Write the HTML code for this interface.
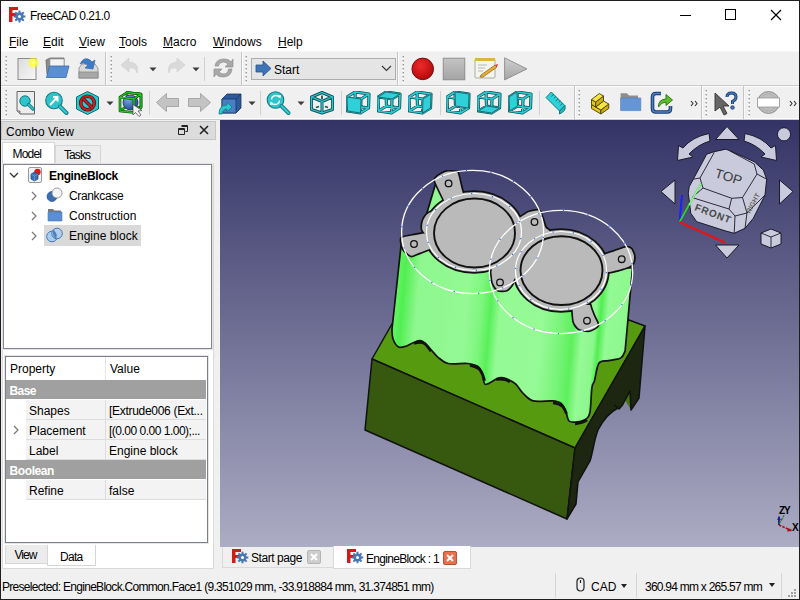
<!DOCTYPE html>
<html><head><meta charset="utf-8">
<style>
*{box-sizing:border-box;margin:0;padding:0}
html,body{width:800px;height:600px;overflow:hidden;background:#f0f0f0;font-family:"Liberation Sans",sans-serif;font-size:12px;color:#000}
.a{position:absolute}
.t{position:absolute;white-space:nowrap;line-height:1}
#frame{position:absolute;left:0;top:0;width:800px;height:600px;border:1px solid #1e1e1e;pointer-events:none;z-index:50}
.mi{position:absolute;top:36px;font-size:12px}
.mi u{text-decoration:underline;text-decoration-thickness:1px;text-underline-offset:1px}
.grip{position:absolute;width:2px;background:repeating-linear-gradient(to bottom,#9a9a9a 0 1px,#fff 1px 2px,transparent 2px 4px)}
.vs{position:absolute;width:1px;background:#d2d2d2}
.dd{position:absolute;width:0;height:0;border-left:3.5px solid transparent;border-right:3.5px solid transparent;border-top:4px solid #222}
.row{position:absolute;left:26px;width:180px;height:20px;background:#f3f3f3;border-bottom:1px solid #dcdcdc;overflow:hidden}
.cdiv{position:absolute;left:105px;top:0;width:1px;height:19px;background:#dcdcdc}
.grp{position:absolute;left:6px;width:200px;height:19px;background:#a0a0a0;color:#fff;font-weight:bold}
</style></head><body>
<div id="frame"></div>
<div class="a" style="left:0;top:0;width:800px;height:51px;background:#fff"></div>
<!-- title -->
<svg class="a" style="left:9px;top:7px" width="17" height="17" viewBox="0 0 17 17">
  <path d="M0 0H9V3H3.5V6H7V9H3.5V15H0Z" fill="#d31a1a"/>
  <g transform="translate(10.5 9.5)" fill="#4a78b5">
    <circle r="4.2"/>
    <path d="M-1 -6H1V6H-1Z M-6 -1H6V1H-6Z" />
    <path d="M-1 -6H1V6H-1Z M-6 -1H6V1H-6Z" transform="rotate(45)"/>
    <circle r="1.5" fill="#fff"/>
  </g>
</svg>
<div class="t" style="left:30px;top:10px;font-size:12px;letter-spacing:-0.5px">FreeCAD 0.21.0</div>
<!-- window buttons -->
<div class="a" style="left:680px;top:15px;width:11px;height:1px;background:#000"></div>
<div class="a" style="left:725px;top:9px;width:11px;height:11px;border:1px solid #000"></div>
<svg class="a" style="left:770px;top:9px" width="12" height="12"><path d="M1 1L11 11M11 1L1 11" stroke="#000" stroke-width="1.2"/></svg>
<!-- menu -->
<div class="mi t" style="left:9px"><u>F</u>ile</div>
<div class="mi t" style="left:43px"><u>E</u>dit</div>
<div class="mi t" style="left:79px"><u>V</u>iew</div>
<div class="mi t" style="left:119px"><u>T</u>ools</div>
<div class="mi t" style="left:163px"><u>M</u>acro</div>
<div class="mi t" style="left:213px"><u>W</u>indows</div>
<div class="mi t" style="left:278px"><u>H</u>elp</div>

<!-- toolbar area -->
<div class="a" style="left:1px;top:51px;width:798px;height:1px;background:#f8f8f8"></div>
<div class="a" style="left:1px;top:85px;width:798px;height:1px;background:#dadada"></div>
<div class="a" style="left:1px;top:119px;width:798px;height:1px;background:#d0d0d0"></div>

<!-- TB -->
<div class="a" style="left:1px;top:85px;width:798px;height:1px;background:#cacaca"></div>
<div class="a" style="left:1px;top:86px;width:798px;height:1px;background:#fcfcfc"></div>
<div class="a" style="left:1px;top:118px;width:798px;height:1px;background:#fcfcfc"></div>
<div class="a" style="left:1px;top:119px;width:798px;height:1px;background:#cacaca"></div>
<svg class="a" style="left:5px;top:56px" width="4" height="29"><rect x="0" y="1" width="2" height="2" fill="#fff"/><rect x="0.5" y="0" width="1.5" height="1.5" fill="#9a9a9a"/><rect x="0" y="5" width="2" height="2" fill="#fff"/><rect x="0.5" y="4" width="1.5" height="1.5" fill="#9a9a9a"/><rect x="0" y="9" width="2" height="2" fill="#fff"/><rect x="0.5" y="8" width="1.5" height="1.5" fill="#9a9a9a"/><rect x="0" y="13" width="2" height="2" fill="#fff"/><rect x="0.5" y="12" width="1.5" height="1.5" fill="#9a9a9a"/><rect x="0" y="17" width="2" height="2" fill="#fff"/><rect x="0.5" y="16" width="1.5" height="1.5" fill="#9a9a9a"/><rect x="0" y="21" width="2" height="2" fill="#fff"/><rect x="0.5" y="20" width="1.5" height="1.5" fill="#9a9a9a"/><rect x="0" y="25" width="2" height="2" fill="#fff"/><rect x="0.5" y="24" width="1.5" height="1.5" fill="#9a9a9a"/></svg>
<svg class="a" style="left:16px;top:56px" width="24" height="25" viewBox="0 0 24 25"><defs><linearGradient id="ndg" x1="0" y1="0" x2="1" y2="1"><stop offset="0" stop-color="#dcdcdc"/><stop offset="1" stop-color="#f8f8f8"/></linearGradient><radialGradient id="ndy"><stop offset="0" stop-color="#ffffd0"/><stop offset="0.35" stop-color="#ffff40"/><stop offset="1" stop-color="#ffff00" stop-opacity="0"/></radialGradient></defs><rect x="2" y="2.5" width="18" height="21" fill="url(#ndg)" stroke="#8a8a8a"/><circle cx="17.5" cy="6.5" r="6.5" fill="url(#ndy)"/></svg>
<svg class="a" style="left:44px;top:56px" width="27" height="24" viewBox="0 0 27 24"><path d="M2 4L6 2H20V18H3Z" fill="#8c8c8c" stroke="#666" stroke-width=".8"/><rect x="6" y="3" width="14" height="9" fill="#f4f4f4" stroke="#999" stroke-width=".7"/><path d="M5.5 10H25L22 21.5H2.5Z" fill="#5a8fd2" stroke="#3c6aa8" stroke-width=".8"/></svg>
<svg class="a" style="left:76px;top:56px" width="25" height="25" viewBox="0 0 25 25"><path d="M3 12L6 8H19L22 12V22H3Z" fill="#d8d8d8" stroke="#8a8a8a" stroke-width=".8"/><rect x="3" y="16" width="19" height="6" fill="#a8a8a8" stroke="#888" stroke-width=".8"/><path d="M4 8Q8 0 14 4L16 6L19 4L17 13L9 12L12 9L10 8Q7 6 4 8Z" fill="#3d7bc7" stroke="#2a5a9a" stroke-width=".6"/></svg>
<div class="a" style="left:105px;top:52px;width:1px;height:33px;background:#c4c4c4"></div><div class="a" style="left:106px;top:52px;width:1px;height:33px;background:#fbfbfb"></div>
<svg class="a" style="left:110px;top:56px" width="4" height="29"><rect x="0" y="1" width="2" height="2" fill="#fff"/><rect x="0.5" y="0" width="1.5" height="1.5" fill="#9a9a9a"/><rect x="0" y="5" width="2" height="2" fill="#fff"/><rect x="0.5" y="4" width="1.5" height="1.5" fill="#9a9a9a"/><rect x="0" y="9" width="2" height="2" fill="#fff"/><rect x="0.5" y="8" width="1.5" height="1.5" fill="#9a9a9a"/><rect x="0" y="13" width="2" height="2" fill="#fff"/><rect x="0.5" y="12" width="1.5" height="1.5" fill="#9a9a9a"/><rect x="0" y="17" width="2" height="2" fill="#fff"/><rect x="0.5" y="16" width="1.5" height="1.5" fill="#9a9a9a"/><rect x="0" y="21" width="2" height="2" fill="#fff"/><rect x="0.5" y="20" width="1.5" height="1.5" fill="#9a9a9a"/><rect x="0" y="25" width="2" height="2" fill="#fff"/><rect x="0.5" y="24" width="1.5" height="1.5" fill="#9a9a9a"/></svg>
<svg class="a" style="left:120px;top:57px" width="22" height="20" viewBox="0 0 22 20"><path d="M9 1L1 8L9 15V11Q16 10 17 16Q20 6 9 5Z" fill="#d9d9d9" stroke="#cfcfcf" stroke-width=".6"/></svg>
<svg class="a" style="left:149px;top:67px" width="8" height="5"><path d="M0.5 0.5H7.5L4 4.3Z" fill="#3c3c3c"/></svg>
<svg class="a" style="left:165px;top:57px" width="22" height="20" viewBox="0 0 22 20"><path d="M12 1L20 8L12 15V11Q5 10 4 16Q1 6 12 5Z" fill="#d9d9d9" stroke="#cfcfcf" stroke-width=".6"/></svg>
<svg class="a" style="left:192px;top:67px" width="8" height="5"><path d="M0.5 0.5H7.5L4 4.3Z" fill="#3c3c3c"/></svg>
<div class="a" style="left:204px;top:57px;width:1px;height:24px;background:#d0d0d0"></div>
<svg class="a" style="left:212px;top:56px" width="23" height="24" viewBox="0 0 23 24"><path d="M3 10Q4 3 12 3Q17 3 19 6L21 3V11H13L16 8Q14 6 11.5 6Q7 6 6.5 10Z M20 13Q19 21 11 21Q6 21 4 18L2 21V13H10L7 16Q9 18 11.5 18Q16 18 16.5 13Z" fill="#a9a9a9" stroke="#8e8e8e" stroke-width=".7"/></svg>
<div class="a" style="left:241px;top:52px;width:1px;height:33px;background:#c4c4c4"></div><div class="a" style="left:242px;top:52px;width:1px;height:33px;background:#fbfbfb"></div>
<svg class="a" style="left:245px;top:56px" width="4" height="29"><rect x="0" y="1" width="2" height="2" fill="#fff"/><rect x="0.5" y="0" width="1.5" height="1.5" fill="#9a9a9a"/><rect x="0" y="5" width="2" height="2" fill="#fff"/><rect x="0.5" y="4" width="1.5" height="1.5" fill="#9a9a9a"/><rect x="0" y="9" width="2" height="2" fill="#fff"/><rect x="0.5" y="8" width="1.5" height="1.5" fill="#9a9a9a"/><rect x="0" y="13" width="2" height="2" fill="#fff"/><rect x="0.5" y="12" width="1.5" height="1.5" fill="#9a9a9a"/><rect x="0" y="17" width="2" height="2" fill="#fff"/><rect x="0.5" y="16" width="1.5" height="1.5" fill="#9a9a9a"/><rect x="0" y="21" width="2" height="2" fill="#fff"/><rect x="0.5" y="20" width="1.5" height="1.5" fill="#9a9a9a"/><rect x="0" y="25" width="2" height="2" fill="#fff"/><rect x="0.5" y="24" width="1.5" height="1.5" fill="#9a9a9a"/></svg>
<div class="a" style="left:251px;top:58px;width:145px;height:22px;background:#e5e5e5;border:1px solid #adadad"></div>
<svg class="a" style="left:255px;top:60px" width="18" height="17" viewBox="0 0 18 17"><path d="M1 5H8V1L16 8.5L8 16V12H1Z" fill="#3f74b9" stroke="#28518a" stroke-width=".8"/></svg>
<div class="t" style="left:274px;top:64px">Start</div>
<svg class="a" style="left:381px;top:65px" width="11" height="7" viewBox="0 0 11 7"><path d="M1 1L5.5 5.5L10 1" fill="none" stroke="#333" stroke-width="1.1"/></svg>
<div class="a" style="left:397px;top:52px;width:1px;height:33px;background:#c4c4c4"></div><div class="a" style="left:398px;top:52px;width:1px;height:33px;background:#fbfbfb"></div>
<svg class="a" style="left:402px;top:56px" width="4" height="29"><rect x="0" y="1" width="2" height="2" fill="#fff"/><rect x="0.5" y="0" width="1.5" height="1.5" fill="#9a9a9a"/><rect x="0" y="5" width="2" height="2" fill="#fff"/><rect x="0.5" y="4" width="1.5" height="1.5" fill="#9a9a9a"/><rect x="0" y="9" width="2" height="2" fill="#fff"/><rect x="0.5" y="8" width="1.5" height="1.5" fill="#9a9a9a"/><rect x="0" y="13" width="2" height="2" fill="#fff"/><rect x="0.5" y="12" width="1.5" height="1.5" fill="#9a9a9a"/><rect x="0" y="17" width="2" height="2" fill="#fff"/><rect x="0.5" y="16" width="1.5" height="1.5" fill="#9a9a9a"/><rect x="0" y="21" width="2" height="2" fill="#fff"/><rect x="0.5" y="20" width="1.5" height="1.5" fill="#9a9a9a"/><rect x="0" y="25" width="2" height="2" fill="#fff"/><rect x="0.5" y="24" width="1.5" height="1.5" fill="#9a9a9a"/></svg>
<svg class="a" style="left:410px;top:57px" width="26" height="25" viewBox="0 0 26 25"><defs><radialGradient id="rg" cx="0.4" cy="0.35" r="0.7"><stop offset="0" stop-color="#f02a2a"/><stop offset="1" stop-color="#b00808"/></radialGradient></defs><circle cx="12.75" cy="11.9" r="10.8" fill="url(#rg)" stroke="#6a0a0a" stroke-width=".9"/></svg>
<svg class="a" style="left:442px;top:57px" width="25" height="25" viewBox="0 0 25 25"><defs><linearGradient id="sg" x1="0" y1="0" x2="0" y2="1"><stop offset="0" stop-color="#c4c4c4"/><stop offset="1" stop-color="#a4a4a4"/></linearGradient></defs><rect x="1.2" y="1.2" width="21.6" height="21.6" fill="url(#sg)" stroke="#888" stroke-width=".9"/></svg>
<svg class="a" style="left:473px;top:56px" width="26" height="25" viewBox="0 0 26 25"><rect x="2" y="3" width="20" height="19" rx="1" fill="#f4f4f0" stroke="#9a9a90" stroke-width=".8"/><rect x="2" y="2" width="20" height="3" fill="#d4b840"/><path d="M5 9H14M5 12H12M5 15H10" stroke="#aaa" stroke-width=".8"/><path d="M8 19L22 9L24 11L10 21L7 21Z" fill="#e8b030" stroke="#8a5a10" stroke-width=".7"/><path d="M22 9L24 11L25 8Z" fill="#e03030"/></svg>
<svg class="a" style="left:503px;top:56px" width="26" height="26" viewBox="0 0 26 26"><defs><linearGradient id="pg" x1="0" y1="0" x2="0" y2="1"><stop offset="0" stop-color="#cfcfcf"/><stop offset="1" stop-color="#a5a5a5"/></linearGradient></defs><path d="M1.6 1.8V23.9L23.9 12.9Z" fill="url(#pg)" stroke="#8a8a8a" stroke-width=".9"/></svg>
<svg class="a" style="left:5px;top:90px" width="4" height="29"><rect x="0" y="1" width="2" height="2" fill="#fff"/><rect x="0.5" y="0" width="1.5" height="1.5" fill="#9a9a9a"/><rect x="0" y="5" width="2" height="2" fill="#fff"/><rect x="0.5" y="4" width="1.5" height="1.5" fill="#9a9a9a"/><rect x="0" y="9" width="2" height="2" fill="#fff"/><rect x="0.5" y="8" width="1.5" height="1.5" fill="#9a9a9a"/><rect x="0" y="13" width="2" height="2" fill="#fff"/><rect x="0.5" y="12" width="1.5" height="1.5" fill="#9a9a9a"/><rect x="0" y="17" width="2" height="2" fill="#fff"/><rect x="0.5" y="16" width="1.5" height="1.5" fill="#9a9a9a"/><rect x="0" y="21" width="2" height="2" fill="#fff"/><rect x="0.5" y="20" width="1.5" height="1.5" fill="#9a9a9a"/><rect x="0" y="25" width="2" height="2" fill="#fff"/><rect x="0.5" y="24" width="1.5" height="1.5" fill="#9a9a9a"/></svg>
<svg class="a" style="left:15px;top:90px" width="22" height="26" viewBox="0 0 22 26"><path d="M2 1.5H19.5V24H5L2 21Z" fill="#ececec" stroke="#555" stroke-width=".9"/><path d="M2 21H5V24" fill="#bbb" stroke="#555" stroke-width=".7"/><circle cx="10" cy="11" r="5.2" fill="#2fc4cc" stroke="#137a82" stroke-width="1"/><path d="M13.5 14.5L18 19" stroke="#137a82" stroke-width="3.2" stroke-linecap="round"/><path d="M13.5 14.5L18 19" stroke="#30c8d0" stroke-width="1.6" stroke-linecap="round"/></svg>
<svg class="a" style="left:44px;top:89px" width="26" height="26" viewBox="0 0 26 26"><circle cx="10" cy="11.5" r="8.3" fill="#2fc4cc" stroke="#137a82" stroke-width="1.1"/><path d="M16 17.5L22.5 24" stroke="#137a82" stroke-width="4" stroke-linecap="round"/><path d="M16 17.5L22.5 24" stroke="#30c8d0" stroke-width="2.2" stroke-linecap="round"/><path d="M6 16L13 8.5M9 8H13.5V12.5" fill="none" stroke="#fff" stroke-width="2"/></svg>
<svg class="a" style="left:75px;top:90px" width="26" height="26" viewBox="0 0 26 26"><path d="M12.5 1.5L23.5 7V19L12.5 24.5L1.5 19V7Z" fill="#2cc6cf" stroke="#156a70" stroke-width="1"/><circle cx="12.5" cy="13" r="6.8" fill="none" stroke="#222" stroke-width="3.6"/><circle cx="12.5" cy="13" r="6.8" fill="none" stroke="#d81818" stroke-width="2.2"/><path d="M8 8.5L17 17.5" stroke="#222" stroke-width="3.4"/><path d="M8 8.5L17 17.5" stroke="#d81818" stroke-width="2"/></svg>
<svg class="a" style="left:106px;top:101px" width="8" height="5"><path d="M0.5 0.5H7.5L4 4.3Z" fill="#3c3c3c"/></svg>
<svg class="a" style="left:117px;top:90px" width="27" height="27" viewBox="0 0 27 27"><defs><radialGradient id="bsg" cx="0.35" cy="0.3" r="0.75"><stop offset="0" stop-color="#7aa8e0"/><stop offset="1" stop-color="#1e4a90"/></radialGradient></defs><path d="M10 2.5 L24 4 L24 17.5 L10 16 Z M3 21 L10 16" fill="none" stroke="#0a3a0a" stroke-width="2.6" stroke-linejoin="round"/><path d="M10 2.5 L24 4 L24 17.5 L10 16 Z M3 21 L10 16" fill="none" stroke="#1ecc1e" stroke-width="1.4" stroke-linejoin="round"/><circle cx="13.5" cy="12.5" r="7.5" fill="url(#bsg)" stroke="#1a2a50" stroke-width=".8"/><path d="M3 7 L17 9 L17 22.5 L3 21Z M3 7 L10 2.5 L24 4 L24 17.5 M17 9 L24 4 M17 22.5 L24 17.5" fill="none" stroke="#0a3a0a" stroke-width="2.6" stroke-linejoin="round"/><path d="M3 7 L17 9 L17 22.5 L3 21Z M3 7 L10 2.5 L24 4 L24 17.5 M17 9 L24 4 M17 22.5 L24 17.5" fill="none" stroke="#1ecc1e" stroke-width="1.4" stroke-linejoin="round"/><path d="M16 14.5L16 25L18.5 22.5L22 26.5L24 25L21 21L25 20.5Z" fill="#f4f4f4" stroke="#555" stroke-width=".8"/></svg>
<div class="a" style="left:149px;top:91px;width:1px;height:24px;background:#d0d0d0"></div>
<svg class="a" style="left:155px;top:92px" width="26" height="22" viewBox="0 0 26 22"><path d="M1.5 10.5L11.5 1.5V6.5H23.5V14.5H11.5V19.5Z" fill="#c3c3c3" stroke="#a2a2a2" stroke-width=".9"/></svg>
<svg class="a" style="left:186px;top:92px" width="26" height="22" viewBox="0 0 26 22"><path d="M24.5 10.5L14.5 1.5V6.5H2.5V14.5H14.5V19.5Z" fill="#c3c3c3" stroke="#a2a2a2" stroke-width=".9"/></svg>
<svg class="a" style="left:217px;top:92px" width="26" height="24" viewBox="0 0 26 24"><path d="M5 7L10 2H24V16L19 21H5Z" fill="#2c5a9c" stroke="#16365e" stroke-width=".8"/><path d="M5 7H19V21H5Z" fill="#4a7ec4" stroke="#16365e" stroke-width=".8"/><path d="M19 7L24 2" stroke="#16365e" stroke-width=".8"/><path d="M2 22Q2 13 10 13V10L15 15L10 20V17Q6 17 5 22Z" fill="#2cc6cf" stroke="#137a82" stroke-width=".8"/></svg>
<svg class="a" style="left:248px;top:101px" width="8" height="5"><path d="M0.5 0.5H7.5L4 4.3Z" fill="#3c3c3c"/></svg>
<div class="a" style="left:260px;top:91px;width:1px;height:24px;background:#d0d0d0"></div>
<svg class="a" style="left:265px;top:90px" width="28" height="26" viewBox="0 0 28 26"><circle cx="10.5" cy="10" r="8.3" fill="#2fc4cc" stroke="#137a82" stroke-width="1.1"/><path d="M16.5 16L23.5 23" stroke="#137a82" stroke-width="4" stroke-linecap="round"/><path d="M16.5 16L23.5 23" stroke="#30c8d0" stroke-width="2.2" stroke-linecap="round"/><path d="M6.5 9.5Q7 5.5 11 5.5Q13.5 5.5 14.5 7.5 M14.5 10.5Q14 14.5 10 14.5Q7.5 14.5 6.5 12.5" fill="none" stroke="#fff" stroke-width="1.4"/><path d="M13 5.5L15.5 8.5L16 5Z M8 14.5L5.5 11.5L5 15Z" fill="#fff"/></svg>
<svg class="a" style="left:297px;top:101px" width="8" height="5"><path d="M0.5 0.5H7.5L4 4.3Z" fill="#3c3c3c"/></svg>
<svg class="a" style="left:309px;top:91px" width="26" height="24" viewBox="0 0 26 24"><path d="M13 1.5L23.5 6V18.5L13 22L2.5 18.5V6Z M2.5 6L13 10.5L23.5 6 M13 10.5V22" fill="none" stroke="#14555a" stroke-width="3" stroke-linejoin="round"/><path d="M13 1.5L23.5 6V18.5L13 22L2.5 18.5V6Z M2.5 6L13 10.5L23.5 6 M13 10.5V22" fill="none" stroke="#2ccad2" stroke-width="1.3" stroke-linejoin="round"/><path d="M13 4.5V8 M7 16.5L10 15.5 M16 15.5L19 16.5" stroke="#14555a" stroke-width="1.8"/></svg>
<div class="a" style="left:341px;top:91px;width:1px;height:24px;background:#d0d0d0"></div>
<svg class="a" style="left:346px;top:91px" width="25" height="24" viewBox="0 0 25 24"><polygon points="1,6 15,8 14.5,22 1.5,20" fill="#2fd0d8"/><path d="M1 6 L15 8 L14.5 22 L1.5 20Z M9 1 L23 3 L22.5 17 L9.5 15Z M1 6 L9 1 M15 8 L23 3 M14.5 22 L22.5 17 M1.5 20 L9.5 15" fill="none" stroke="#14555a" stroke-width="3.2" stroke-linejoin="round"/><path d="M1 6 L15 8 L14.5 22 L1.5 20Z M9 1 L23 3 L22.5 17 L9.5 15Z M1 6 L9 1 M15 8 L23 3 M14.5 22 L22.5 17 M1.5 20 L9.5 15" fill="none" stroke="#2ccad2" stroke-width="1.6" stroke-linejoin="round"/><polygon points="1,6 15,8 14.5,22 1.5,20" fill="#2fd0d8" stroke="#14555a" stroke-width=".8"/></svg>
<svg class="a" style="left:377px;top:91px" width="25" height="24" viewBox="0 0 25 24"><polygon points="1,6 15,8 23,3 9,1" fill="#2fd0d8"/><path d="M1 6 L15 8 L14.5 22 L1.5 20Z M9 1 L23 3 L22.5 17 L9.5 15Z M1 6 L9 1 M15 8 L23 3 M14.5 22 L22.5 17 M1.5 20 L9.5 15" fill="none" stroke="#14555a" stroke-width="3.2" stroke-linejoin="round"/><path d="M1 6 L15 8 L14.5 22 L1.5 20Z M9 1 L23 3 L22.5 17 L9.5 15Z M1 6 L9 1 M15 8 L23 3 M14.5 22 L22.5 17 M1.5 20 L9.5 15" fill="none" stroke="#2ccad2" stroke-width="1.6" stroke-linejoin="round"/><polygon points="1,6 15,8 23,3 9,1" fill="#2fd0d8" stroke="#14555a" stroke-width=".8"/></svg>
<svg class="a" style="left:408px;top:91px" width="25" height="24" viewBox="0 0 25 24"><polygon points="15,8 23,3 22.5,17 14.5,22" fill="#2fd0d8"/><path d="M1 6 L15 8 L14.5 22 L1.5 20Z M9 1 L23 3 L22.5 17 L9.5 15Z M1 6 L9 1 M15 8 L23 3 M14.5 22 L22.5 17 M1.5 20 L9.5 15" fill="none" stroke="#14555a" stroke-width="3.2" stroke-linejoin="round"/><path d="M1 6 L15 8 L14.5 22 L1.5 20Z M9 1 L23 3 L22.5 17 L9.5 15Z M1 6 L9 1 M15 8 L23 3 M14.5 22 L22.5 17 M1.5 20 L9.5 15" fill="none" stroke="#2ccad2" stroke-width="1.6" stroke-linejoin="round"/><polygon points="15,8 23,3 22.5,17 14.5,22" fill="#2fd0d8" stroke="#14555a" stroke-width=".8"/></svg>
<div class="a" style="left:440px;top:91px;width:1px;height:24px;background:#d0d0d0"></div>
<svg class="a" style="left:446px;top:91px" width="25" height="24" viewBox="0 0 25 24"><polygon points="9,1 23,3 22.5,17 9.5,15" fill="#2fd0d8"/><path d="M1 6 L15 8 L14.5 22 L1.5 20Z M9 1 L23 3 L22.5 17 L9.5 15Z M1 6 L9 1 M15 8 L23 3 M14.5 22 L22.5 17 M1.5 20 L9.5 15" fill="none" stroke="#14555a" stroke-width="3.2" stroke-linejoin="round"/><path d="M1 6 L15 8 L14.5 22 L1.5 20Z M9 1 L23 3 L22.5 17 L9.5 15Z M1 6 L9 1 M15 8 L23 3 M14.5 22 L22.5 17 M1.5 20 L9.5 15" fill="none" stroke="#2ccad2" stroke-width="1.6" stroke-linejoin="round"/><polygon points="9,1 23,3 22.5,17 9.5,15" fill="#2fd0d8" stroke="#14555a" stroke-width=".8"/></svg>
<svg class="a" style="left:477px;top:91px" width="25" height="24" viewBox="0 0 25 24"><polygon points="1.5,20 14.5,22 22.5,17 9.5,15" fill="#2fd0d8"/><path d="M1 6 L15 8 L14.5 22 L1.5 20Z M9 1 L23 3 L22.5 17 L9.5 15Z M1 6 L9 1 M15 8 L23 3 M14.5 22 L22.5 17 M1.5 20 L9.5 15" fill="none" stroke="#14555a" stroke-width="3.2" stroke-linejoin="round"/><path d="M1 6 L15 8 L14.5 22 L1.5 20Z M9 1 L23 3 L22.5 17 L9.5 15Z M1 6 L9 1 M15 8 L23 3 M14.5 22 L22.5 17 M1.5 20 L9.5 15" fill="none" stroke="#2ccad2" stroke-width="1.6" stroke-linejoin="round"/><polygon points="1.5,20 14.5,22 22.5,17 9.5,15" fill="#2fd0d8" stroke="#14555a" stroke-width=".8"/></svg>
<svg class="a" style="left:508px;top:91px" width="25" height="24" viewBox="0 0 25 24"><polygon points="1,6 9,1 9.5,15 1.5,20" fill="#2fd0d8"/><path d="M1 6 L15 8 L14.5 22 L1.5 20Z M9 1 L23 3 L22.5 17 L9.5 15Z M1 6 L9 1 M15 8 L23 3 M14.5 22 L22.5 17 M1.5 20 L9.5 15" fill="none" stroke="#14555a" stroke-width="3.2" stroke-linejoin="round"/><path d="M1 6 L15 8 L14.5 22 L1.5 20Z M9 1 L23 3 L22.5 17 L9.5 15Z M1 6 L9 1 M15 8 L23 3 M14.5 22 L22.5 17 M1.5 20 L9.5 15" fill="none" stroke="#2ccad2" stroke-width="1.6" stroke-linejoin="round"/><polygon points="1,6 9,1 9.5,15 1.5,20" fill="#2fd0d8" stroke="#14555a" stroke-width=".8"/></svg>
<div class="a" style="left:539px;top:91px;width:1px;height:24px;background:#d0d0d0"></div>
<svg class="a" style="left:544px;top:90px" width="24" height="25" viewBox="0 0 24 25"><path d="M15.5 21L20.8 15.5Q23 20.5 15.5 24Z" fill="#26b8c0" stroke="#0f6a70" stroke-width=".9"/><path d="M2 7.5L7.3 2L20.8 15.5L15.5 21Z" fill="#2cd2da" stroke="#0f6a70" stroke-width=".9"/><path d="M9.6 4.2L7.3 6.5 M11.8 6.5L10.2 8.1 M14.1 8.8L11.8 11.0 M16.3 11.0L14.7 12.6 M18.6 13.2L16.3 15.5 " stroke="#0f6a70" stroke-width="1"/></svg>
<div class="a" style="left:574px;top:86px;width:1px;height:33px;background:#c4c4c4"></div><div class="a" style="left:575px;top:86px;width:1px;height:33px;background:#fbfbfb"></div>
<svg class="a" style="left:578px;top:90px" width="4" height="29"><rect x="0" y="1" width="2" height="2" fill="#fff"/><rect x="0.5" y="0" width="1.5" height="1.5" fill="#9a9a9a"/><rect x="0" y="5" width="2" height="2" fill="#fff"/><rect x="0.5" y="4" width="1.5" height="1.5" fill="#9a9a9a"/><rect x="0" y="9" width="2" height="2" fill="#fff"/><rect x="0.5" y="8" width="1.5" height="1.5" fill="#9a9a9a"/><rect x="0" y="13" width="2" height="2" fill="#fff"/><rect x="0.5" y="12" width="1.5" height="1.5" fill="#9a9a9a"/><rect x="0" y="17" width="2" height="2" fill="#fff"/><rect x="0.5" y="16" width="1.5" height="1.5" fill="#9a9a9a"/><rect x="0" y="21" width="2" height="2" fill="#fff"/><rect x="0.5" y="20" width="1.5" height="1.5" fill="#9a9a9a"/><rect x="0" y="25" width="2" height="2" fill="#fff"/><rect x="0.5" y="24" width="1.5" height="1.5" fill="#9a9a9a"/></svg>
<svg class="a" style="left:588px;top:91px" width="24" height="25" viewBox="0 0 24 25"><g stroke="#4a4008" stroke-width=".9" stroke-linejoin="round"><path d="M3.5 13.5L12.9 19V23L3.5 17.5Z" fill="#e2c81c"/><path d="M12.9 19L20.75 13V17.5L12.9 23Z" fill="#cdb010"/><path d="M7.7 16L15.5 10L20.75 13L12.9 19Z" fill="#f6e444"/><path d="M3.5 8.5L7.7 11V16L3.5 13.5Z" fill="#e2c81c"/><path d="M7.7 11L15.5 5V10L7.7 16Z" fill="#cdb010"/><path d="M3.5 8.5L11.3 2.5L15.5 5L7.7 11Z" fill="#f6e444"/></g></svg>
<svg class="a" style="left:618px;top:91px" width="25" height="22" viewBox="0 0 25 22"><path d="M2.6 2.3H9L11 4.5H20V8H2.6Z" fill="#8e8e8e"/><path d="M2.6 7H22.8V19.6H2.6Z" fill="#6496d6" stroke="#4a7cc0" stroke-width=".6"/></svg>
<svg class="a" style="left:650px;top:90px" width="25" height="25" viewBox="0 0 25 25"><path d="M11 3.5H6Q2.5 3.5 2.5 7V18.5Q2.5 22 6 22H17Q20.5 22 20.5 18.5V16" fill="none" stroke="#1a3a6a" stroke-width="3.6"/><path d="M11 3.5H6Q2.5 3.5 2.5 7V18.5Q2.5 22 6 22H17Q20.5 22 20.5 18.5V16" fill="none" stroke="#4a80c4" stroke-width="1.6"/><path d="M8.5 17Q8 9.5 16 9V4.5L22.5 10L16 15.5V12Q11.5 12 8.5 17Z" fill="#5ac02a" stroke="#2a6a10" stroke-width=".9"/></svg>
<svg class="a" style="left:690px;top:100px" width="9" height="7" viewBox="0 0 9 7"><path d="M1 1L3 3.5L1 6 M5 1L7 3.5L5 6" fill="none" stroke="#333" stroke-width="1.1"/></svg>
<div class="a" style="left:701px;top:86px;width:1px;height:33px;background:#c4c4c4"></div><div class="a" style="left:702px;top:86px;width:1px;height:33px;background:#fbfbfb"></div>
<svg class="a" style="left:705px;top:90px" width="4" height="29"><rect x="0" y="1" width="2" height="2" fill="#fff"/><rect x="0.5" y="0" width="1.5" height="1.5" fill="#9a9a9a"/><rect x="0" y="5" width="2" height="2" fill="#fff"/><rect x="0.5" y="4" width="1.5" height="1.5" fill="#9a9a9a"/><rect x="0" y="9" width="2" height="2" fill="#fff"/><rect x="0.5" y="8" width="1.5" height="1.5" fill="#9a9a9a"/><rect x="0" y="13" width="2" height="2" fill="#fff"/><rect x="0.5" y="12" width="1.5" height="1.5" fill="#9a9a9a"/><rect x="0" y="17" width="2" height="2" fill="#fff"/><rect x="0.5" y="16" width="1.5" height="1.5" fill="#9a9a9a"/><rect x="0" y="21" width="2" height="2" fill="#fff"/><rect x="0.5" y="20" width="1.5" height="1.5" fill="#9a9a9a"/><rect x="0" y="25" width="2" height="2" fill="#fff"/><rect x="0.5" y="24" width="1.5" height="1.5" fill="#9a9a9a"/></svg>
<svg class="a" style="left:712px;top:90px" width="28" height="26" viewBox="0 0 28 26"><path d="M3 3L3 21L8 17L12 25L15 23.5L11 16L17 16Z" fill="#666" stroke="#333" stroke-width=".9"/><path d="M15 7Q15 3 19.5 3Q24 3 24 7Q24 10 20.5 11.5V14" fill="none" stroke="#1a3a6a" stroke-width="3"/><path d="M15 7Q15 3 19.5 3Q24 3 24 7Q24 10 20.5 11.5V14" fill="none" stroke="#3f74b9" stroke-width="1.5"/><circle cx="20.5" cy="17.5" r="1.8" fill="#3f74b9" stroke="#1a3a6a" stroke-width=".8"/></svg>
<div class="a" style="left:743px;top:86px;width:1px;height:33px;background:#c4c4c4"></div><div class="a" style="left:744px;top:86px;width:1px;height:33px;background:#fbfbfb"></div>
<svg class="a" style="left:748px;top:90px" width="4" height="29"><rect x="0" y="1" width="2" height="2" fill="#fff"/><rect x="0.5" y="0" width="1.5" height="1.5" fill="#9a9a9a"/><rect x="0" y="5" width="2" height="2" fill="#fff"/><rect x="0.5" y="4" width="1.5" height="1.5" fill="#9a9a9a"/><rect x="0" y="9" width="2" height="2" fill="#fff"/><rect x="0.5" y="8" width="1.5" height="1.5" fill="#9a9a9a"/><rect x="0" y="13" width="2" height="2" fill="#fff"/><rect x="0.5" y="12" width="1.5" height="1.5" fill="#9a9a9a"/><rect x="0" y="17" width="2" height="2" fill="#fff"/><rect x="0.5" y="16" width="1.5" height="1.5" fill="#9a9a9a"/><rect x="0" y="21" width="2" height="2" fill="#fff"/><rect x="0.5" y="20" width="1.5" height="1.5" fill="#9a9a9a"/><rect x="0" y="25" width="2" height="2" fill="#fff"/><rect x="0.5" y="24" width="1.5" height="1.5" fill="#9a9a9a"/></svg>
<svg class="a" style="left:755px;top:90px" width="28" height="25" viewBox="0 0 28 25"><circle cx="13.5" cy="12.5" r="11" fill="#bdbdbd" stroke="#8a8a8a" stroke-width=".9"/><circle cx="13.5" cy="12.5" r="8.5" fill="none" stroke="#9a9a9a" stroke-width=".8" stroke-dasharray="1 1"/><rect x="2.5" y="8" width="22" height="9" fill="#fff" stroke="#999" stroke-width=".8"/></svg>
<svg class="a" style="left:789px;top:100px" width="9" height="7" viewBox="0 0 9 7"><path d="M1 1L3 3.5L1 6 M5 1L7 3.5L5 6" fill="none" stroke="#333" stroke-width="1.1"/></svg>
<!-- /TB -->
<!-- combo view panel -->
<div class="a" style="left:1px;top:121px;width:215px;height:19px;background:#dcdcdc;border:1px solid #c6c6c6"></div>
<div class="t" style="left:6px;top:126px">Combo View</div>
<svg class="a" style="left:178px;top:125px" width="10" height="10"><path d="M3.5 .5H9.5V6.5H7.5M.5 3.5H6.5V9.5H.5Z M.5 4.5H6.5 M3.5 1.5H9.5" fill="none" stroke="#222"/></svg>
<svg class="a" style="left:199px;top:125px" width="10" height="10"><path d="M1 1L9 9M9 1L1 9" stroke="#222" stroke-width="1.6"/></svg>
<!-- model/tasks tabs -->
<div class="a" style="left:55px;top:145px;width:46px;height:19px;background:#ececec;border:1px solid #d6d6d6;border-bottom:none"></div>
<div class="a" style="left:2px;top:142px;width:53px;height:22px;background:#fff;border:1px solid #d6d6d6;border-bottom:none"></div>
<div class="t" style="left:12.5px;top:148px;letter-spacing:-0.8px">Model</div>
<div class="t" style="left:64px;top:149px;letter-spacing:-0.9px">Tasks</div>
<!-- tab pane -->
<div class="a" style="left:2px;top:163px;width:212px;height:406px;background:#fff;border:1px solid #d9d9d9"></div>
<!-- tree -->
<div class="a" style="left:2px;top:163px;width:211px;height:187px;border:1px solid #e3e3e3"></div><div class="a" style="left:3px;top:164px;width:209px;height:185px;background:#fff;border:1px solid #828790"></div>
<div class="a" style="left:44px;top:225px;width:97px;height:21px;background:#d9d9d9"></div>
<svg class="a" style="left:9px;top:172px" width="10" height="7"><path d="M1 1L5 5L9 1" fill="none" stroke="#333" stroke-width="1.3"/></svg>
<div class="t" style="left:49px;top:170px;font-weight:bold;letter-spacing:-0.35px">EngineBlock</div>
<div class="t" style="left:69px;top:190px;letter-spacing:-0.35px">Crankcase</div>
<div class="t" style="left:69px;top:210px">Construction</div>
<div class="t" style="left:69px;top:230px">Engine block</div>
<svg class="a" style="left:31px;top:191px" width="6" height="50"><path d="M1 1L5 5L1 9 M1 21L5 25L1 29 M1 41L5 45L1 49" fill="none" stroke="#777" stroke-width="1.2"/></svg>
<!-- property view -->
<div class="a" style="left:4px;top:355px;width:205px;height:189px;border:1px solid #e6e6e6"></div>
<div class="a" style="left:5px;top:356px;width:203px;height:187px;background:#fff;border:1px solid #7a7f8a"></div>
<div class="a" style="left:105px;top:357px;width:1px;height:23px;background:#e5e5e5"></div>
<div class="t" style="left:10px;top:363px">Property</div>
<div class="t" style="left:110px;top:363px">Value</div>
<div class="grp" style="top:380px"><span class="t" style="left:3.5px;top:5px;letter-spacing:-0.6px">Base</span></div>
<div class="row" style="top:400px"><div class="cdiv" style="left:79px"></div><span class="t" style="left:3px;top:5px">Shapes</span><span class="t" style="left:83px;top:5px;letter-spacing:-0.3px">[Extrude006 (Ext...</span></div>
<div class="row" style="top:420px"><div class="cdiv" style="left:79px"></div><span class="t" style="left:3px;top:5px">Placement</span><span class="t" style="left:83px;top:5px;letter-spacing:-0.5px">[(0.00 0.00 1.00);...</span></div>
<div class="row" style="top:440px"><div class="cdiv" style="left:79px"></div><span class="t" style="left:3px;top:5px">Label</span><span class="t" style="left:83px;top:5px">Engine block</span></div>
<svg class="a" style="left:13px;top:425px" width="6" height="10"><path d="M1 1L5 5L1 9" fill="none" stroke="#777" stroke-width="1.2"/></svg>
<div class="grp" style="top:460px"><span class="t" style="left:3.5px;top:5px;letter-spacing:-0.4px">Boolean</span></div>
<div class="row" style="top:480px"><div class="cdiv" style="left:79px"></div><span class="t" style="left:3px;top:5px">Refine</span><span class="t" style="left:83px;top:5px">false</span></div>
<!-- view/data tabs -->
<div class="a" style="left:5px;top:545px;width:43px;height:19px;background:#ececec;border:1px solid #d6d6d6;border-top:none"></div>
<div class="a" style="left:47px;top:545px;width:49px;height:21px;background:#fff;border:1px solid #d6d6d6;border-top:none"></div>
<div class="t" style="left:14.5px;top:549px;letter-spacing:-1px">View</div>
<div class="t" style="left:60px;top:551px;letter-spacing:-0.7px">Data</div>

<!-- 3D view -->
<div class="a" style="left:220px;top:120px;width:579px;height:427px;background:linear-gradient(to bottom,#333366 0%,#acacc4 100%)"></div>

<!-- SCENE -->
<svg class="a" style="left:220px;top:120px" width="579" height="427" viewBox="220 120 579 427">
<defs>
<linearGradient id="gb" x1="421.7" x2="661.7" y1="0" y2="0" gradientUnits="userSpaceOnUse" gradientTransform="skewX(-5)">
<stop offset="0" stop-color="#66f266"/>
<stop offset="0.03" stop-color="#50ee50"/>
<stop offset="0.09" stop-color="#8ef78e"/>
<stop offset="0.30" stop-color="#94f994"/>
<stop offset="0.36" stop-color="#7ef67e"/>
<stop offset="0.40" stop-color="#58f058"/>
<stop offset="0.44" stop-color="#94fa94"/>
<stop offset="0.62" stop-color="#96fa96"/>
<stop offset="0.70" stop-color="#78f478"/>
<stop offset="0.75" stop-color="#5cf05c"/>
<stop offset="0.79" stop-color="#96fa96"/>
<stop offset="0.84" stop-color="#8cf88c"/>
<stop offset="0.86" stop-color="#50ee50"/>
<stop offset="0.89" stop-color="#94fa94"/>
<stop offset="0.97" stop-color="#8ef88e"/>
<stop offset="1" stop-color="#60f060"/>
</linearGradient>
</defs>
<path d="M372 359L392.5 323L629 320L645 326L575 448Z" fill="#569a10" stroke="#111" stroke-linejoin="round" stroke-width="1.5"/>
<path d="M372 359L575 448L567 519L365 430Z" fill="#36590f" stroke="#111" stroke-linejoin="round" stroke-width="1.5"/>
<path d="M622 395L631 384L635 400L631 410Z" fill="#46730e"/>
<path d="M575 448L645 326L639 398L631 410L630 391L622.5 405L619 409L614.6 405L618 408C610 412 603 420 598 430C594 440 593 452 590 461L578 482L576 504L567 519Z" fill="#1c2610" stroke="#111" stroke-linejoin="round" stroke-width="1.5"/>
<path d="M392 329 C392.0 330.8 392.1 336.5 393.2 339.5 C394.4 342.5 396.4 345.9 398.5 347.0 C400.6 348.1 402.9 347.2 406.0 346.2 C409.1 345.2 414.4 341.8 417.2 341.0 C420.1 340.2 421.1 340.5 423.2 341.8 C425.4 343.0 427.6 346.0 430.0 348.5 C432.4 351.0 434.5 354.2 437.5 356.8 C440.5 359.2 443.0 362.4 448.0 363.5 C453.0 364.6 462.5 363.0 467.5 363.5 C472.5 364.0 475.5 364.8 478.0 366.5 C480.5 368.2 481.2 371.0 482.5 374.0 C483.8 377.0 482.8 383.9 485.5 384.5 C488.2 385.1 495.4 378.7 499.0 377.8 C502.6 376.8 504.2 377.9 507.0 379.0 C509.8 380.1 513.1 381.9 515.8 384.2 C518.4 386.6 519.8 390.2 522.8 393.0 C525.7 395.8 528.3 399.6 533.2 400.9 C538.2 402.2 547.8 400.5 552.5 400.9 C557.2 401.3 559.1 401.9 561.2 403.5 C563.4 405.1 564.3 407.6 565.6 410.5 C566.9 413.4 567.1 419.1 569.0 421.0 C570.9 422.9 574.2 422.2 577.0 421.9 C579.8 421.6 583.6 420.9 585.8 419.2 C587.9 417.6 589.0 417.5 590.0 412.2 C591.0 407.0 591.1 393.0 591.9 387.8 C592.6 382.5 593.3 384.8 594.5 380.8 C595.7 376.7 596.6 366.6 598.9 363.2 C601.2 359.9 604.9 361.5 608.5 360.6 C612.1 359.7 618.0 359.6 620.8 358.0 C623.5 356.4 624.4 352.2 625.1 351.0 L627 330 L632.5 268 L606 267 L585 238 L540 232 L520 230 L500 205 L465 192 L437 179 L426 216 L427 238 L404 241 L401 246 Z" fill="url(#gb)" stroke="#111" stroke-linejoin="round" stroke-width="1.7"/>
<path d="M414 342.5Q421 340.5 425 343Q428 346 431 350.5" fill="none" stroke="#111" stroke-width="2.8" transform="translate(0 0.8)"/>
<path d="M470 364.5Q477 366 480 369Q483 373 484.5 380" fill="none" stroke="#111" stroke-width="2.8" transform="translate(0 0.8)"/>
<path d="M496 378.5Q505 377.5 510 381" fill="none" stroke="#111" stroke-width="2.8" transform="translate(0 0.8)"/>
<path d="M553 402Q560 403 563 406Q565 409 566.5 413" fill="none" stroke="#111" stroke-width="2.8" transform="translate(0 0.8)"/>
<path d="M575 423Q583 422 587 419" fill="none" stroke="#111" stroke-width="2.8" transform="translate(0 0.8)"/>
<g fill="#bababa" stroke="#111" stroke-width="3.4" stroke-linejoin="round"><ellipse cx="474" cy="232" rx="49" ry="40"/><ellipse cx="561" cy="270.5" rx="47" ry="40.5"/><path d="M446.0 204.0 C444.8 201.4 436.6 185.2 435.5 182.0 C434.4 178.8 435.8 178.2 437.0 177.0 C438.2 175.8 443.7 172.6 446.0 172.0 C448.3 171.4 455.0 171.5 456.5 172.0 C458.0 172.5 457.8 173.7 458.5 176.0 C459.2 178.3 461.4 188.7 462.3 191.5 C463.2 194.3 465.6 199.0 466.0 200.0 Z"/><path d="M428.0 233.0 C426.0 233.3 414.1 235.2 411.0 235.8 C407.9 236.4 402.8 237.1 401.7 238.2 C400.6 239.3 401.7 243.6 402.0 245.0 C402.3 246.4 402.9 248.6 404.0 249.8 C405.1 251.0 409.4 255.3 411.0 255.7 C412.6 256.1 415.6 254.2 418.0 253.3 C420.4 252.4 430.4 248.6 432.0 248.0 Z"/><path d="M430.0 240.0 C429.1 238.8 423.3 232.2 422.5 230.0 C421.7 227.8 422.4 222.9 423.0 221.0 C423.6 219.1 425.9 215.3 427.5 214.0 C429.1 212.7 434.8 210.2 437.0 210.0 C439.2 209.8 444.9 211.8 446.0 212.0 Z"/><path d="M505.0 203.0 C506.2 204.3 513.2 212.3 515.0 214.0 C516.8 215.7 518.4 217.6 520.0 217.4 C521.6 217.2 526.3 213.1 528.5 212.3 C530.7 211.5 537.0 210.0 538.6 210.6 C540.2 211.2 541.2 215.4 542.0 217.4 C542.8 219.4 544.5 225.4 545.4 227.5 C546.3 229.6 551.8 230.0 550.0 235.0 C548.2 240.0 533.3 265.2 530.0 270.0 C526.7 274.8 523.5 275.1 521.7 276.0 C520.0 276.9 516.2 276.9 515.0 278.0 C513.8 279.1 512.6 283.6 511.6 285.0 C510.6 286.4 508.2 289.4 506.6 290.0 C505.0 290.6 499.6 290.8 498.0 290.0 C496.4 289.2 493.8 285.1 493.0 283.0 C492.2 280.9 491.6 273.3 491.4 272.0 Z"/><path d="M602.0 258.0 C602.2 257.6 602.6 255.8 604.0 255.0 C605.4 254.2 611.4 252.4 614.0 251.5 C616.6 250.6 624.0 247.8 626.0 247.5 C628.0 247.2 630.1 248.0 631.0 249.0 C631.9 250.0 633.8 254.4 634.0 256.0 C634.2 257.6 633.7 261.7 633.0 263.0 C632.3 264.3 629.8 266.2 628.0 267.0 C626.2 267.8 620.2 269.4 618.0 270.0 C615.8 270.6 610.6 271.9 609.0 272.0 C607.4 272.1 604.6 271.1 604.0 271.0 Z"/><path d="M570.0 305.0 C570.3 305.4 571.9 306.5 572.4 308.5 C572.9 310.5 573.2 319.6 574.0 322.0 C574.8 324.4 577.2 327.7 579.0 328.7 C580.8 329.7 587.0 330.8 589.2 330.4 C591.4 330.0 597.1 327.0 597.7 325.4 C598.3 323.8 595.1 319.0 594.3 317.0 C593.5 315.0 591.5 309.9 591.0 308.5 C590.5 307.1 590.1 305.4 590.0 305.0 Z"/></g>
<g fill="#bababa"><ellipse cx="474" cy="232" rx="49" ry="40"/><ellipse cx="561" cy="270.5" rx="47" ry="40.5"/><path d="M446.0 204.0 C444.8 201.4 436.6 185.2 435.5 182.0 C434.4 178.8 435.8 178.2 437.0 177.0 C438.2 175.8 443.7 172.6 446.0 172.0 C448.3 171.4 455.0 171.5 456.5 172.0 C458.0 172.5 457.8 173.7 458.5 176.0 C459.2 178.3 461.4 188.7 462.3 191.5 C463.2 194.3 465.6 199.0 466.0 200.0 Z"/><path d="M428.0 233.0 C426.0 233.3 414.1 235.2 411.0 235.8 C407.9 236.4 402.8 237.1 401.7 238.2 C400.6 239.3 401.7 243.6 402.0 245.0 C402.3 246.4 402.9 248.6 404.0 249.8 C405.1 251.0 409.4 255.3 411.0 255.7 C412.6 256.1 415.6 254.2 418.0 253.3 C420.4 252.4 430.4 248.6 432.0 248.0 Z"/><path d="M430.0 240.0 C429.1 238.8 423.3 232.2 422.5 230.0 C421.7 227.8 422.4 222.9 423.0 221.0 C423.6 219.1 425.9 215.3 427.5 214.0 C429.1 212.7 434.8 210.2 437.0 210.0 C439.2 209.8 444.9 211.8 446.0 212.0 Z"/><path d="M505.0 203.0 C506.2 204.3 513.2 212.3 515.0 214.0 C516.8 215.7 518.4 217.6 520.0 217.4 C521.6 217.2 526.3 213.1 528.5 212.3 C530.7 211.5 537.0 210.0 538.6 210.6 C540.2 211.2 541.2 215.4 542.0 217.4 C542.8 219.4 544.5 225.4 545.4 227.5 C546.3 229.6 551.8 230.0 550.0 235.0 C548.2 240.0 533.3 265.2 530.0 270.0 C526.7 274.8 523.5 275.1 521.7 276.0 C520.0 276.9 516.2 276.9 515.0 278.0 C513.8 279.1 512.6 283.6 511.6 285.0 C510.6 286.4 508.2 289.4 506.6 290.0 C505.0 290.6 499.6 290.8 498.0 290.0 C496.4 289.2 493.8 285.1 493.0 283.0 C492.2 280.9 491.6 273.3 491.4 272.0 Z"/><path d="M602.0 258.0 C602.2 257.6 602.6 255.8 604.0 255.0 C605.4 254.2 611.4 252.4 614.0 251.5 C616.6 250.6 624.0 247.8 626.0 247.5 C628.0 247.2 630.1 248.0 631.0 249.0 C631.9 250.0 633.8 254.4 634.0 256.0 C634.2 257.6 633.7 261.7 633.0 263.0 C632.3 264.3 629.8 266.2 628.0 267.0 C626.2 267.8 620.2 269.4 618.0 270.0 C615.8 270.6 610.6 271.9 609.0 272.0 C607.4 272.1 604.6 271.1 604.0 271.0 Z"/><path d="M570.0 305.0 C570.3 305.4 571.9 306.5 572.4 308.5 C572.9 310.5 573.2 319.6 574.0 322.0 C574.8 324.4 577.2 327.7 579.0 328.7 C580.8 329.7 587.0 330.8 589.2 330.4 C591.4 330.0 597.1 327.0 597.7 325.4 C598.3 323.8 595.1 319.0 594.3 317.0 C593.5 315.0 591.5 309.9 591.0 308.5 C590.5 307.1 590.1 305.4 590.0 305.0 Z"/></g>
<g fill="none" stroke="#fff" stroke-width="1.2"><ellipse cx="474" cy="232" rx="47.5" ry="38.5"/><ellipse cx="561" cy="270.5" rx="45.5" ry="39"/></g>
<g fill="none" stroke="#111" stroke-width="1.9">
<ellipse cx="474.5" cy="233" rx="40.5" ry="34.5"/>
<ellipse cx="561.5" cy="270.6" rx="41" ry="34.4"/>
</g>
<g fill="none" stroke="#111" stroke-width="1.3">
<circle cx="448.6" cy="183.4" r="3.3"/>
<circle cx="414" cy="244" r="3.3"/>
<circle cx="500" cy="282.4" r="3.3"/>
<circle cx="534.5" cy="222" r="3.3"/>
<circle cx="621.7" cy="259.2" r="3.3"/>
<circle cx="587" cy="320.7" r="3.3"/>
</g>
<g fill="none" stroke="#fff" stroke-width="1.3">
<ellipse cx="472.6" cy="232" rx="71" ry="61.6"/>
<ellipse cx="561" cy="272" rx="71.7" ry="61.6"/>
</g>
<rect x="542.7" y="236.7" width="1.3" height="1.3" fill="#4070e8"/><rect x="536.3" y="257.4" width="1.3" height="1.3" fill="#4070e8"/><rect x="522.2" y="274.9" width="1.3" height="1.3" fill="#4070e8"/><rect x="502.0" y="287.2" width="1.3" height="1.3" fill="#4070e8"/><rect x="478.1" y="292.7" width="1.3" height="1.3" fill="#4070e8"/><rect x="453.6" y="290.9" width="1.3" height="1.3" fill="#4070e8"/><rect x="431.2" y="281.8" width="1.3" height="1.3" fill="#4070e8"/><rect x="413.8" y="266.7" width="1.3" height="1.3" fill="#4070e8"/><rect x="403.4" y="247.3" width="1.3" height="1.3" fill="#4070e8"/><rect x="401.2" y="226.0" width="1.3" height="1.3" fill="#4070e8"/><rect x="407.6" y="205.3" width="1.3" height="1.3" fill="#4070e8"/><rect x="421.7" y="187.8" width="1.3" height="1.3" fill="#4070e8"/><rect x="441.9" y="175.5" width="1.3" height="1.3" fill="#4070e8"/><rect x="465.8" y="170.0" width="1.3" height="1.3" fill="#4070e8"/><rect x="490.3" y="171.8" width="1.3" height="1.3" fill="#4070e8"/><rect x="512.7" y="180.9" width="1.3" height="1.3" fill="#4070e8"/><rect x="530.1" y="196.0" width="1.3" height="1.3" fill="#4070e8"/><rect x="540.5" y="215.4" width="1.3" height="1.3" fill="#4070e8"/><rect x="630.5" y="284.2" width="1.3" height="1.3" fill="#4070e8"/><rect x="621.2" y="304.0" width="1.3" height="1.3" fill="#4070e8"/><rect x="604.5" y="319.9" width="1.3" height="1.3" fill="#4070e8"/><rect x="582.5" y="329.9" width="1.3" height="1.3" fill="#4070e8"/><rect x="557.8" y="332.9" width="1.3" height="1.3" fill="#4070e8"/><rect x="533.5" y="328.5" width="1.3" height="1.3" fill="#4070e8"/><rect x="512.4" y="317.1" width="1.3" height="1.3" fill="#4070e8"/><rect x="497.0" y="300.3" width="1.3" height="1.3" fill="#4070e8"/><rect x="489.3" y="279.9" width="1.3" height="1.3" fill="#4070e8"/><rect x="490.2" y="258.5" width="1.3" height="1.3" fill="#4070e8"/><rect x="499.5" y="238.7" width="1.3" height="1.3" fill="#4070e8"/><rect x="516.2" y="222.8" width="1.3" height="1.3" fill="#4070e8"/><rect x="538.2" y="212.8" width="1.3" height="1.3" fill="#4070e8"/><rect x="562.9" y="209.8" width="1.3" height="1.3" fill="#4070e8"/><rect x="587.2" y="214.2" width="1.3" height="1.3" fill="#4070e8"/><rect x="608.3" y="225.6" width="1.3" height="1.3" fill="#4070e8"/><rect x="623.7" y="242.4" width="1.3" height="1.3" fill="#4070e8"/><rect x="631.4" y="262.8" width="1.3" height="1.3" fill="#4070e8"/><rect x="520.1" y="238.0" width="1.3" height="1.3" fill="#4070e8"/><rect x="511.9" y="253.8" width="1.3" height="1.3" fill="#4070e8"/><rect x="496.1" y="265.2" width="1.3" height="1.3" fill="#4070e8"/><rect x="475.7" y="269.8" width="1.3" height="1.3" fill="#4070e8"/><rect x="454.9" y="266.8" width="1.3" height="1.3" fill="#4070e8"/><rect x="437.7" y="256.8" width="1.3" height="1.3" fill="#4070e8"/><rect x="427.6" y="241.8" width="1.3" height="1.3" fill="#4070e8"/><rect x="426.6" y="224.7" width="1.3" height="1.3" fill="#4070e8"/><rect x="434.8" y="208.9" width="1.3" height="1.3" fill="#4070e8"/><rect x="450.6" y="197.5" width="1.3" height="1.3" fill="#4070e8"/><rect x="471.0" y="192.9" width="1.3" height="1.3" fill="#4070e8"/><rect x="491.8" y="195.9" width="1.3" height="1.3" fill="#4070e8"/><rect x="509.0" y="205.9" width="1.3" height="1.3" fill="#4070e8"/><rect x="519.1" y="220.9" width="1.3" height="1.3" fill="#4070e8"/><rect x="605.8" y="271.9" width="1.3" height="1.3" fill="#4070e8"/><rect x="600.3" y="288.6" width="1.3" height="1.3" fill="#4070e8"/><rect x="586.8" y="301.6" width="1.3" height="1.3" fill="#4070e8"/><rect x="568.1" y="308.3" width="1.3" height="1.3" fill="#4070e8"/><rect x="547.9" y="307.4" width="1.3" height="1.3" fill="#4070e8"/><rect x="530.2" y="299.0" width="1.3" height="1.3" fill="#4070e8"/><rect x="518.4" y="284.9" width="1.3" height="1.3" fill="#4070e8"/><rect x="514.9" y="267.8" width="1.3" height="1.3" fill="#4070e8"/><rect x="520.4" y="251.1" width="1.3" height="1.3" fill="#4070e8"/><rect x="533.9" y="238.1" width="1.3" height="1.3" fill="#4070e8"/><rect x="552.6" y="231.4" width="1.3" height="1.3" fill="#4070e8"/><rect x="572.8" y="232.3" width="1.3" height="1.3" fill="#4070e8"/><rect x="590.5" y="240.7" width="1.3" height="1.3" fill="#4070e8"/><rect x="602.3" y="254.8" width="1.3" height="1.3" fill="#4070e8"/>
</svg>
<!-- /SCENE -->
<!-- NAV -->
<svg class="a" style="left:650px;top:120px" width="149" height="145" viewBox="650 120 149 145">
<g fill="#c9cadb" stroke="#1a1a2a" stroke-width="1" stroke-linejoin="round">
<path d="M727 126.5L739 139.5L715.5 139.5Z"/>
<path d="M727 258L739 245L715.5 245Z"/>
<path d="M661 191.5L675 180L675 204Z"/>
<path d="M793 191.5L779.5 180L779.5 204Z"/>
<circle cx="784" cy="134.3" r="6.6"/>
<path d="M709 133.5Q692 137 683 148L678.5 145.5L677.5 160.5L693 157L689 154Q698 144.5 710 141Z"/>
<path d="M745 133.5Q762 137 771 148L775.5 145.5L776.5 160.5L761 157L765 154Q756 144.5 744 141Z"/>
<path d="M706.7 154.2L714.2 151.7L725.8 149.2L730 150.8L754.2 161.7L763.3 170L766.7 179.2L765 195L753.3 218.3L745 228.3L734.2 233.3L725 230.8L696.7 221.7L690.8 213.3L688.3 193.3L689.2 186.7L693.3 179.2Z"/>
<path d="M761 233L771 229L781 233L781 244L771 248L761 244Z"/>
</g>
<g fill="none" stroke="#1a1a2a" stroke-width="0.9">
<path d="M693.3 179.2L700 178L714.2 152.5 M700 178L703 188L731.7 198.3L742.5 197.5L757 174L754.2 164L730 151 M757 174L766.7 179.2 M703 188L692 197.5L729 209L731.7 198.3 M729 209L735 216L734.2 233.3 M735 216L747 213L742.5 197.5 M747 213L745 228.3 M747 213L765 195"/>
<path d="M761 233L771 237L781 233 M771 237L771 248"/>
</g>
<text x="0" y="0" font-family="Liberation Sans" font-size="13" fill="#3a3a3a" transform="translate(714 177) rotate(17) scale(1.05 1)">TOP</text>
<text x="0" y="0" font-family="Liberation Sans" font-size="10" font-weight="bold" fill="#4a4a4a" letter-spacing="0.8" transform="translate(694 210) rotate(21)">FRONT</text>
<text x="0" y="0" font-family="Liberation Sans" font-size="7" font-weight="bold" fill="#666" transform="translate(750 214) rotate(-62)">RIGHT</text>
<path d="M679.5 222L682 195" stroke="#2020ff" stroke-width="2"/>
<path d="M679.5 222L701 183.5" stroke="#22dd22" stroke-width="1.6"/>
<path d="M689 205L701 183.5" stroke="#a8f0a8" stroke-width="1.2"/>
<path d="M679.5 222L725 242.5" stroke="#ee1111" stroke-width="2"/>
</svg>
<!-- /NAV -->
<!-- doc tabs -->
<div class="a" style="left:222px;top:547px;width:112px;height:21px;background:#f0f0f0;border:1px solid #d9d9d9;border-top:none"></div>
<div class="a" style="left:333px;top:546px;width:138px;height:23px;background:#fff;border:1px solid #d9d9d9;border-top:none"></div>
<div class="t" style="left:251px;top:552px;letter-spacing:-0.45px">Start page</div>
<div class="t" style="left:366px;top:553px;letter-spacing:-0.7px">EngineBlock : 1</div>

<!-- MISC -->
<!-- tree icons -->
<svg class="a" style="left:28px;top:167px" width="15" height="16"><rect x=".5" y=".5" width="13" height="15" rx="1.5" fill="#f2f2f2" stroke="#9a9a9a"/><circle cx="9.5" cy="5" r="3.2" fill="#e01818"/><path d="M3 7L6.5 5L10 7V12L6.5 14L3 12Z" fill="#3a6eb0" stroke="#1e4a80" stroke-width=".7"/><path d="M3 7L6.5 9L10 7M6.5 9V14" fill="none" stroke="#7aa6e0" stroke-width=".6"/></svg>
<svg class="a" style="left:46px;top:187px" width="18" height="16"><circle cx="6" cy="9.5" r="5" fill="#3a6eb0" stroke="#244e88" stroke-width=".7"/><circle cx="11" cy="6" r="5" fill="#f4f4f4" stroke="#888" stroke-width=".8"/></svg>
<svg class="a" style="left:47px;top:207px" width="16" height="15"><path d="M1 2H6L7.5 3.5H14V13H1Z" fill="#7a7a7a"/><path d="M1 5H15V14H1Z" fill="#5a8fd2" stroke="#4a78b8" stroke-width=".6"/></svg>
<svg class="a" style="left:46px;top:227px" width="18" height="16"><circle cx="6" cy="9.5" r="5.3" fill="#a8cdef" stroke="#3a6eb0" stroke-width=".9"/><circle cx="11" cy="6.5" r="5.3" fill="#a8cdef" fill-opacity=".8" stroke="#3a6eb0" stroke-width=".9"/><path d="M7 2.5Q12 6 10 12Q6 9 7 2.5Z" fill="#3a6eb0" opacity=".8"/></svg>
<!-- doc tab icons -->
<svg class="a" style="left:232px;top:549px" width="17" height="15" viewBox="0 0 17 15"><path d="M0 0H9V3H3.5V6H7V9H3.5V14H0Z" fill="#d31a1a"/><g transform="translate(10.5 8.5)" fill="#4a78b5"><circle r="4"/><path d="M-1 -5.8H1V5.8H-1Z M-5.8 -1H5.8V1H-5.8Z"/><path d="M-1 -5.8H1V5.8H-1Z M-5.8 -1H5.8V1H-5.8Z" transform="rotate(45)"/><circle r="1.5" fill="#fff"/></g></svg>
<svg class="a" style="left:347px;top:549px" width="17" height="15" viewBox="0 0 17 15"><path d="M0 0H9V3H3.5V6H7V9H3.5V14H0Z" fill="#d31a1a"/><g transform="translate(10.5 8.5)" fill="#4a78b5"><circle r="4"/><path d="M-1 -5.8H1V5.8H-1Z M-5.8 -1H5.8V1H-5.8Z"/><path d="M-1 -5.8H1V5.8H-1Z M-5.8 -1H5.8V1H-5.8Z" transform="rotate(45)"/><circle r="1.5" fill="#fff"/></g></svg>
<svg class="a" style="left:307px;top:550px" width="14" height="14"><rect x=".5" y=".5" width="13" height="13" rx="1.5" fill="#cdcdcd" stroke="#b4b4b4"/><path d="M4 4L10 10M10 4L4 10" stroke="#fff" stroke-width="2"/></svg>
<svg class="a" style="left:443px;top:551px" width="14" height="14"><rect x=".5" y=".5" width="13" height="13" rx="1.5" fill="#e8704c" stroke="#c0502c"/><path d="M4 4L10 10M10 4L4 10" stroke="#fff" stroke-width="2"/></svg>
<!-- status mouse icon & grip -->
<svg class="a" style="left:576px;top:577px" width="9" height="16"><rect x="1" y="1" width="7" height="13" rx="3.5" fill="none" stroke="#222" stroke-width="1.2"/><path d="M4.5 3V6" stroke="#222" stroke-width="1.2"/></svg>
<svg class="a" style="left:788px;top:589px" width="9" height="9"><g fill="#a0a0a0"><rect x="6" y="0" width="2" height="2"/><rect x="3" y="3" width="2" height="2"/><rect x="6" y="3" width="2" height="2"/><rect x="0" y="6" width="2" height="2"/><rect x="3" y="6" width="2" height="2"/><rect x="6" y="6" width="2" height="2"/></g></svg>
<!-- corner axis -->
<svg class="a" style="left:761px;top:488px" width="38" height="48"><path d="M18 37L18 29" stroke="#1a1a9a" stroke-width="1.8"/><path d="M18 27.5L16.2 32H19.8Z" fill="#1a1a9a"/><path d="M18 36L23 27.5" stroke="#1a7a1a" stroke-width="1.3" stroke-dasharray="3 1"/><path d="M18 37L30.5 42.5" stroke="#a01010" stroke-width="1.6" stroke-dasharray="2.5 1.2"/><path d="M31 43L26 43.5L27.5 40Z" fill="#a01010"/></svg>
<div class="t" style="left:779px;top:506px;font-size:10px;font-weight:bold;letter-spacing:-1px">ZY</div>
<div class="t" style="left:792px;top:523px;font-size:10px;font-weight:bold">X</div>
<!-- /MISC -->
<!-- status bar -->
<div class="t" style="left:2px;top:581px;letter-spacing:-0.7px">Preselected: EngineBlock.Common.Face1 (9.351029 mm, -33.918884 mm, 31.374851 mm)</div>
<div class="a" style="left:555px;top:573px;width:1px;height:25px;background:#d6d6d6"></div>
<div class="t" style="left:591px;top:581px">CAD</div>
<div class="dd" style="left:621px;top:584px"></div>
<div class="a" style="left:636px;top:573px;width:1px;height:25px;background:#d6d6d6"></div>
<div class="t" style="left:645px;top:581px;letter-spacing:-0.75px">360.94 mm x 265.57 mm</div>
<div class="dd" style="left:769px;top:583px"></div>
<div class="a" style="left:781px;top:573px;width:1px;height:25px;background:#d6d6d6"></div>
</body></html>
